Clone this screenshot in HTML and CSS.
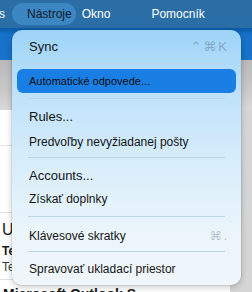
FILE: index.html
```html
<!DOCTYPE html>
<html lang="sk">
<head>
<meta charset="utf-8">
<link rel="stylesheet" href="styles.css">
</head>
<body>
<div class="screen">
  <div class="menubar">
    <span class="mb cut">s</span>
    <span class="mb active">Nástroje</span>
    <span class="mb okno">Okno</span>
    <span class="mb help">Pomocník</span>
  </div>
  <div class="ribbon"></div>
  <div class="toolbar"></div>
  <div class="content">
    <div class="list">
      <div class="row r1"></div>
      <div class="row r2"></div>
      <div class="row msg">
        <div class="sender">U</div>
        <div class="subject">Te</div>
        <div class="preview">Te</div>
      </div>
      <div class="row last">Microsoft Outlook S</div>
    </div>
    <div class="side"></div>
  </div>

  <div class="menu">
    <div class="item lg"><span>Sync</span><span class="key">⌃⌘K</span></div>
    <div class="sep"></div>
    <div class="item sm selected"><span>Automatické odpovede...</span></div>
    <div class="sep"></div>
    <div class="item lg"><span>Rules...</span></div>
    <div class="item md low"><span>Predvoľby nevyžiadanej pošty</span></div>
    <div class="sep"></div>
    <div class="item lg"><span>Accounts...</span></div>
    <div class="item md"><span>Získať doplnky</span></div>
    <div class="sep"></div>
    <div class="item md low"><span>Klávesové skratky</span><span class="key dim">⌘.</span></div>
    <div class="sep"></div>
    <div class="item md"><span>Spravovať ukladací priestor</span></div>
  </div>
</div>
</body>
</html>
```

FILE: styles.css
```css
* { box-sizing: border-box; }
html, body { margin: 0; padding: 0; }
body {
  width: 252px;
  height: 292px;
  overflow: hidden;
  font-family: "Liberation Sans", "DejaVu Sans", sans-serif;
  background: #fff;
}
.screen {
  position: relative;
  width: 252px;
  height: 292px;
  overflow: hidden;
  display: flex;
  flex-direction: column;
}

/* top menu bar */
.menubar {
  height: 28px;
  flex: none;
  display: flex;
  align-items: center;
  background: linear-gradient(180deg, #2b6ea5 0%, #2a6ea7 100%);
  font-size: 12px;
  color: #fff;
}
.mb { white-space: nowrap; line-height: 22px; }
.cut { margin-left: -1px; width: 13px; }
.active {
  background: #3c86c3;
  color: #0d1b29;
  border-radius: 11px;
  padding: 0 4px 0 15px;
  height: 22px;
}
.okno { margin-left: 6px; }
.help { margin-left: 41px; }

.ribbon {
  height: 32px;
  flex: none;
  background: linear-gradient(180deg, #0c5aa7 0px, #0f62b4 3px, #1672c9 6px, #1773cb 100%);
}
.toolbar {
  height: 50px;
  flex: none;
  background: linear-gradient(180deg, #b9b9b9 0%, #c9c9c9 60%, #d9d9d9 100%);
}
.content {
  flex: 1;
  display: flex;
  background: #fff;
}
.list {
  flex: 1;
  display: flex;
  flex-direction: column;
}
.row { border-bottom: 1px solid #e2e2e2; flex: none; }
.r1 { height: 36px; }
.r2 { height: 67px; }
.msg {
  height: 67px;
  padding: 7px 0 0 2px;
  color: #1b1b1b;
}
.sender { font-size: 16px; line-height: 19px; }
.subject { font-size: 12px; font-weight: bold; line-height: 17px; margin-top: 4px; }
.preview { font-size: 12px; line-height: 15px; color: #3a3a3a; }
.last {
  border: none;
  padding: 6px 0 0 3px;
  font-size: 14px;
  line-height: 16px;
  font-weight: bold;
  color: #1b1b1b;
  white-space: nowrap;
}
.side {
  width: 22px;
  flex: none;
  background: #d6d6d6;
}

/* dropdown menu */
.menu {
  position: absolute;
  left: 12px;
  top: 30px;
  width: 229px;
  height: 255px;
  border-radius: 10px;
  padding: 4px 0 3px;
  display: flex;
  flex-direction: column;
  background: linear-gradient(180deg, #9dd3f8 0%, #bfe2fa 25%, #daeefb 55%, #ebf5fb 80%, #f0f6fa 100%);
  box-shadow: 0 2px 7px rgba(0, 0, 0, 0.22), 0 0 0 0.5px rgba(40, 70, 100, 0.18);
  color: #141414;
}
.item {
  height: 24px;
  margin: 0 5px;
  padding: 0 9px 0 12px;
  border-radius: 6px;
  display: flex;
  align-items: center;
  justify-content: space-between;
  white-space: nowrap;
  flex: none;
}
.lg { font-size: 13px; }
.md { font-size: 12px; }
.sm { font-size: 11px; }
.low { padding-top: 3px; }
.selected { background: #1a7fe5; color: #0c0c0c; }
.key {
  font-size: 13px;
  color: #86a9c6;
  letter-spacing: 2px;
  margin-right: -2px;
}
.key.dim { color: #b3c0ca; font-size: 12px; }
.sep {
  height: 1px;
  margin: 5px 16px;
  background: #bcd5e7;
  flex: none;
}
```
